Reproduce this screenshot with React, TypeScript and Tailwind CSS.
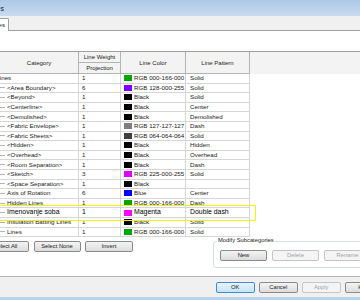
import clsx from "clsx";

type Row = {
  name: string;
  top?: boolean;
  big?: boolean;
  weight: string;
  swatch?: string;
  color: string;
  pattern: string;
};

const rows: Row[] = [
  { name: "Lines", top: true, weight: "1", swatch: "#00a600", color: "RGB 000-166-000", pattern: "Solid" },
  { name: "<Area Boundary>", weight: "6", swatch: "#8000ff", color: "RGB 128-000-255", pattern: "Solid" },
  { name: "<Beyond>", weight: "1", swatch: "#000000", color: "Black", pattern: "Solid" },
  { name: "<Centerline>", weight: "1", swatch: "#000000", color: "Black", pattern: "Center" },
  { name: "<Demolished>", weight: "1", swatch: "#000000", color: "Black", pattern: "Demolished" },
  { name: "<Fabric Envelope>", weight: "1", swatch: "#7f7f7f", color: "RGB 127-127-127", pattern: "Dash" },
  { name: "<Fabric Sheets>", weight: "1", swatch: "#404040", color: "RGB 064-064-064", pattern: "Solid" },
  { name: "<Hidden>", weight: "1", swatch: "#000000", color: "Black", pattern: "Hidden" },
  { name: "<Overhead>", weight: "1", swatch: "#000000", color: "Black", pattern: "Overhead" },
  { name: "<Room Separation>", weight: "1", swatch: "#000000", color: "Black", pattern: "Dash" },
  { name: "<Sketch>", weight: "3", swatch: "#e100ff", color: "RGB 225-000-255", pattern: "Solid" },
  { name: "<Space Separation>", weight: "1", swatch: "#000000", color: "Black", pattern: "" },
  { name: "Axis of Rotation", weight: "6", swatch: "#0000ff", color: "Blue", pattern: "Center" },
  { name: "Hidden Lines", weight: "1", swatch: "#00a600", color: "RGB 000-166-000", pattern: "Dash" },
  { name: "Imenovanje soba", big: true, weight: "1", swatch: "#ff00ff", color: "Magenta", pattern: "Double dash" },
  { name: "Insulation Batting Lines", weight: "1", swatch: "#000000", color: "Black", pattern: "Solid" },
  { name: "Lines", weight: "1", swatch: "#00a600", color: "RGB 000-166-000", pattern: "Solid" },
];

function Btn({
  children,
  className,
  disabled,
  primary,
}: {
  children: React.ReactNode;
  className?: string;
  disabled?: boolean;
  primary?: boolean;
}) {
  return (
    <button
      className={clsx(
        "h-[11px] shrink-0 rounded-[2px] border text-[5.8px] leading-none flex items-center justify-center whitespace-nowrap",
        disabled && "border-[#c2c6c9] bg-[#f4f4f4] text-[#a3a3a3]",
        primary && "border-[#3c8dd8] bg-linear-to-b from-[#e8f4fc] to-[#c6e4f7] text-[#1a1a1a]",
        !disabled && !primary && "border-[#8a8a8a] bg-linear-to-b from-[#f4f4f4] to-[#dcdcdc] text-[#1a1a1a]",
        className
      )}
    >
      {children}
    </button>
  );
}

const cols = "grid grid-cols-[79px_42px_65px_64px_1fr]";
const head = "border-r border-b border-[#b4b4b4] flex items-center justify-center whitespace-nowrap";

export default function App() {
  return (
    <div className="w-[360px] h-[300px] overflow-hidden bg-white flex flex-col font-['Liberation_Sans',Arial,sans-serif] text-[#1a1a1a]">
      {/* title bar */}
      <div className="h-[16px] shrink-0 bg-linear-to-b from-[#adc8e7] to-[#c8dbf0] flex items-center">
        <div className="w-[4px] overflow-hidden flex justify-end">
          <span className="whitespace-nowrap text-[7px] leading-none">Line Styles</span>
        </div>
      </div>

      {/* tab strip */}
      <div className="h-[15px] shrink-0 bg-[#f0f0f0] border-b border-[#a0a0a0] flex items-end">
        <div className="w-[9px] h-[13px] -mb-px bg-white border-t border-r border-[#a0a0a0] rounded-tr-[2px] flex items-center">
          <div className="w-[5px] overflow-hidden flex justify-end">
            <span className="whitespace-nowrap text-[6.2px] leading-none">Lines</span>
          </div>
        </div>
      </div>

      <div className="h-[20px] shrink-0" />

      {/* table */}
      <div className="relative shrink-0">
        <div className={clsx(cols, "grid-rows-[11px_11px] border-t border-[#a0a0a0] bg-[#f3f3f3] text-[6px] leading-none")}>
          <div className={clsx(head, "row-span-2")}>Category</div>
          <div className={head}>Line Weight</div>
          <div className={clsx(head, "row-span-2")}>Line Color</div>
          <div className={clsx(head, "row-span-2")}>Line Pattern</div>
          <div className="row-span-2" />
          <div className={clsx(head, "col-start-2")}>Projection</div>
        </div>

        {rows.map((r, i) => (
          <div
            key={i}
            className={clsx(cols, "h-[9.6px] leading-none", r.big ? "text-[6.9px] text-black" : "text-[6.2px]")}
          >
            <div className="border-r border-b border-[#d6d6d6] flex items-center overflow-hidden whitespace-nowrap">
              {r.top ? (
                <span className="-ml-[3.6px]">{r.name}</span>
              ) : (
                <>
                  <span className="w-[5px] shrink-0 border-t border-[#b4b4b4]" />
                  <span className="ml-[2px]">{r.name}</span>
                </>
              )}
            </div>
            <div className="border-r border-b border-[#d6d6d6] flex items-center pl-[3px]">{r.weight}</div>
            <div className="border-r border-b border-[#d6d6d6] flex items-center overflow-hidden whitespace-nowrap">
              <span className="ml-[3px] w-[8px] h-[6px] shrink-0" style={{ backgroundColor: r.swatch }} />
              <span className="ml-[2px]">{r.color}</span>
            </div>
            <div className="border-r border-b border-[#d6d6d6] flex items-center pl-[4px] whitespace-nowrap overflow-hidden">
              {r.pattern}
            </div>
            <div />
          </div>
        ))}

        {/* yellow highlight annotation */}
        <div className="absolute left-[-4px] top-[154px] w-[260px] h-[16px] border-[1.5px] border-[#f4f400]" />
      </div>

      {/* buttons + modify group */}
      <div className="h-[39px] shrink-0 flex items-start pt-[4px]">
        <div className="flex gap-[4.5px] -ml-[18px]">
          <Btn className="w-[47px]">Select All</Btn>
          <Btn className="w-[47px]">Select None</Btn>
          <Btn className="w-[48px]">Invert</Btn>
        </div>
        <div className="relative ml-[80px] w-[170px] h-[27px] shrink-0 border border-[#d5dfe5] rounded-[3px] flex items-start gap-[5px] pl-[6px] pt-[8px]">
          <span className="absolute -top-[4px] left-[3px] bg-white px-[1px] text-[5.8px] leading-none whitespace-nowrap">Modify Subcategories</span>
          <Btn className="w-[47px]">New</Btn>
          <Btn className="w-[47px]" disabled>Delete</Btn>
          <Btn className="w-[47px]" disabled>Rename</Btn>
        </div>
      </div>

      {/* bottom bar */}
      <div className="h-[21px] shrink-0 bg-[#f0f0f0] border-t border-[#b4b4b4] flex items-start pt-[5px] pl-[216px] gap-[4.5px]">
        <Btn className="w-[38.5px]" primary>OK</Btn>
        <Btn className="w-[38.5px]">Cancel</Btn>
        <Btn className="w-[38.5px]" disabled>Apply</Btn>
        <Btn className="w-[38.5px]">Help</Btn>
      </div>

      <div className="flex-1 bg-[#b9d1ea]" />
    </div>
  );
}
